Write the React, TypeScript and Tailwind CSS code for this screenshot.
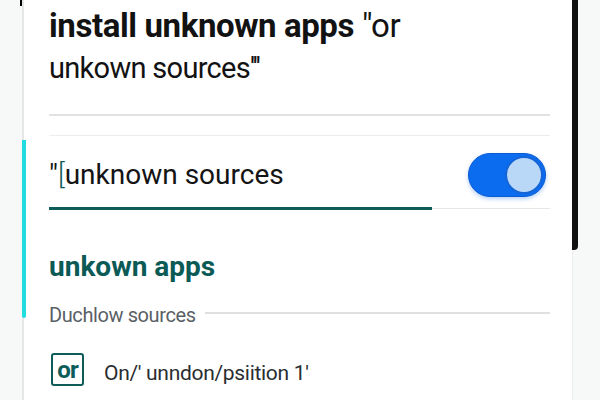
import React from "react";

export default function App() {
  return (
    <div className="w-[600px] h-[400px] bg-[#f7f8f8] overflow-hidden relative" style={{ fontFamily: "Roboto, 'Noto Sans', sans-serif" }}>
      <div className="absolute left-[20px] top-0 w-[3px] h-[6px] bg-black" />
      <div className="ml-[22px] w-[556px] h-[400px] flex">
        <div className="relative flex-1 bg-white border-l-2 border-[#e6e8e8] flex flex-col pl-[25px] pr-[22px]">
          <div className="absolute left-[-2px] top-[140px] w-[4px] h-[178px] bg-[#22dde0] rounded-b" />
          <div className="pt-[6px] text-[33px] leading-[40px] text-[#121212] tracking-[-0.4px] whitespace-nowrap">
            <span className="font-bold">install unknown apps</span> "or
          </div>
          <div className="mt-[5px] text-[29px] leading-[35px] text-[#121212] tracking-[-0.7px] whitespace-nowrap">unkown sources'''</div>
          <div className="mt-[28px] h-[2px] bg-[#e2e2e2]" />
          <div className="mt-[19px] h-[1px] bg-[#ededed]" />
          <div className="mt-[17px] h-[44px] flex items-center justify-between">
            <div className="text-[28px] leading-[32px] text-[#141414] tracking-[0px] whitespace-nowrap">"<span className="text-[#0e5c5a] font-light">[</span>unknown sources</div>
            <div className="w-[78px] h-[44px] rounded-full bg-[#0b6cf0] border border-[#0a5bd0] flex items-center justify-end pr-[2px] shadow-[0_2px_4px_rgba(10,100,230,0.3)] mr-[4px]">
              <div className="w-[38px] h-[38px] rounded-full bg-[#b9d8f8] border-2 border-[#1564d8]" />
            </div>
          </div>
          <div className="mt-[10px] flex items-center">
            <div className="w-[383px] h-[3px] bg-[#0e5c5a]" />
            <div className="flex-1 h-[1px] bg-[#e6e6e6]" />
          </div>
          <div className="mt-[41px] text-[28px] leading-[32px] font-bold text-[#0b5a55] tracking-[0px]">unkown apps</div>
          <div className="mt-[20px] flex items-start">
            <div className="text-[20px] leading-[24px] text-[#5a5f66] tracking-[-0.4px] whitespace-nowrap">Duchlow sources</div>
            <div className="flex-1 ml-[9px] mt-[9px] h-[2px] bg-[#e0e0e0]" />
          </div>
          <div className="mt-[26px] flex items-start">
            <div className="ml-[2px] w-[33px] h-[33px] border-[2.5px] border-[#0e5c5a] rounded-[3px] flex items-center justify-center text-[24px] font-bold text-[#0e5c5a] leading-none tracking-[-1px]">or</div>
            <div className="ml-[20px] mt-[7px] text-[21px] leading-[26px] text-[#2a2d30] tracking-[-0.3px] whitespace-nowrap">On/' unndon/psiition 1'</div>
          </div>
        </div>
        <div className="w-[6px] flex flex-col">
          <div className="h-[250px] bg-[#111] rounded-br-[4px]" />
          <div className="flex-1 bg-[#eceeee] w-[1px]" />
        </div>
      </div>
    </div>
  );
}
